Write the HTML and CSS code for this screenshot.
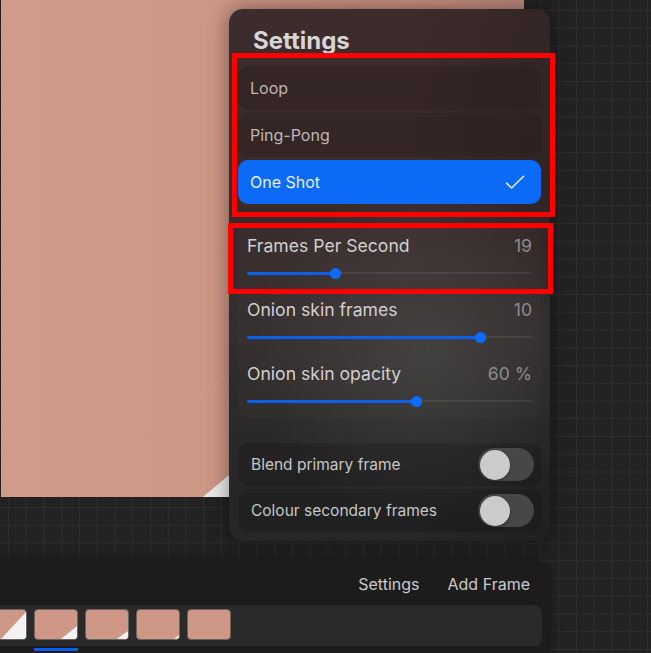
FILE: index.html
```html
<!DOCTYPE html>
<html lang="en">
<head>
<meta charset="utf-8">
<title>Animation Assist Settings</title>
<link rel="stylesheet" href="styles.css">
</head>
<body>
<div class="app">
  <div class="stage">
    <div class="artwork">
      <svg class="streak" width="523" height="497" viewBox="0 0 523 497"><line x1="80" y1="490" x2="235" y2="368" stroke="rgba(255,235,225,0.12)" stroke-width="1" stroke-dasharray="5 4"/></svg>
    </div>
  </div>

  <div class="timeline">
    <div class="tl-actions">
      <span>Settings</span>
      <span>Add Frame</span>
    </div>
    <div class="strip">
      <div class="thumb thumb--a"></div>
      <div class="thumb thumb--b"></div>
      <div class="thumb thumb--c"></div>
      <div class="thumb thumb--d"></div>
      <div class="thumb"></div>
    </div>
    <div class="indicator"></div>
  </div>

  <div class="popover">
    <h2 class="title">Settings</h2>
    <div class="modes">
      <div class="mode">Loop</div>
      <div class="mode">Ping-Pong</div>
      <div class="mode is-selected">One Shot
        <svg class="check" width="20" height="15" viewBox="0 0 20 15"><path d="M1.5 8.2 L6.6 13 L18.6 1.2" fill="none" stroke="#e4ecfb" stroke-width="1.6" stroke-linecap="round" stroke-linejoin="round"/></svg>
      </div>
    </div>
    <div class="sliders">
      <div class="slider">
        <div class="slider-head"><span>Frames Per Second</span><span class="val">19</span></div>
        <div class="track"><div class="fill" style="width:31.2%"></div></div>
      </div>
      <div class="slider">
        <div class="slider-head"><span>Onion skin frames</span><span class="val">10</span></div>
        <div class="track"><div class="fill" style="width:82.1%"></div></div>
      </div>
      <div class="slider">
        <div class="slider-head"><span>Onion skin opacity</span><span class="val">60 %</span></div>
        <div class="track"><div class="fill" style="width:59.6%"></div></div>
      </div>
    </div>
    <div class="toggles">
      <div class="toggle-row"><span>Blend primary frame</span><span class="switch"></span></div>
      <div class="toggle-row"><span>Colour secondary frames</span><span class="switch"></span></div>
    </div>
  </div>

  <div class="mark mark--modes"></div>
  <div class="mark mark--fps"></div>
</div>
</body>
</html>
```

FILE: styles.css
```css
* { box-sizing: border-box; }

html, body {
  margin: 0;
  padding: 0;
}

body {
  font-family: "Inter", "Liberation Sans", sans-serif;
  background: #222;
}

.app {
  position: relative;
  width: 651px;
  height: 653px;
  overflow: hidden;
  display: flex;
  flex-direction: column;
  background-color: #222222;
  background-image:
    linear-gradient(to right, #2e2e2e 1px, transparent 1px),
    linear-gradient(to bottom, #2e2e2e 1px, transparent 1px);
  background-size: 17.75px 17.75px;
  background-position: 8px 10px;
}

/* ---------- canvas ---------- */
.stage {
  flex: 1;
  min-height: 0;
}

.artwork {
  position: relative;
  width: 523px;
  height: 497px;
  margin-left: 1px;
  background: linear-gradient(90deg, #d09b89 0%, #cd9786 45%, #c68e7f 85%, #bb897d 100%);
}

.artwork::after {
  content: "";
  position: absolute;
  inset: 0;
  background: #ececec;
  clip-path: polygon(38.6% 100%, 100% 45.7%, 100% 100%);
}

.streak {
  position: absolute;
  left: 0;
  top: 0;
}

/* ---------- timeline ---------- */
.timeline {
  width: 550px;
  height: 95px;
  flex: none;
  background: #1c1c1c;
  border-top-right-radius: 22px;
  box-shadow: 0 0 14px rgba(0, 0, 0, 0.35);
  display: flex;
  flex-direction: column;
}

.tl-actions {
  display: flex;
  justify-content: flex-end;
  gap: 28px;
  padding: 16px 20px 0 0;
  height: 47px;
  font-size: 16px;
  line-height: 20px;
  color: #c9c9c9;
}

.strip {
  width: 542px;
  height: 41px;
  background: #2a2a2a;
  border-radius: 0 8px 8px 0;
  display: flex;
  gap: 7px;
  padding-top: 4px;
  padding-left: 0;
  overflow: hidden;
}

.thumb {
  position: relative;
  flex: none;
  width: 44px;
  height: 31px;
  border-radius: 4px;
  background: #cf9886;
  border: 1px solid #6b6160;
  overflow: hidden;
}

.thumb:first-child { margin-left: -17px; }

.thumb::after {
  content: "";
  position: absolute;
  right: 0;
  bottom: 0;
  width: 0;
  height: 0;
  background: #f2f2f2;
  clip-path: polygon(100% 0, 100% 100%, 0 100%);
}

.thumb--a::after { width: 25px; height: 27px; }
.thumb--b::after { width: 16px; height: 13px; }
.thumb--c::after { width: 11px; height: 8px; }
.thumb--d::after { width: 5px; height: 4px; }

.indicator {
  width: 44px;
  height: 3px;
  margin: 2px 0 0 34px;
  background: #0a5ef0;
}

/* ---------- popover ---------- */
.popover {
  position: absolute;
  left: 229px;
  top: 9px;
  width: 321px;
  height: 532px;
  padding: 0 9px 9px;
  border-radius: 14px;
  display: flex;
  flex-direction: column;
  background:
    radial-gradient(ellipse 55% 32% at 62% 64%, rgba(78, 76, 76, 0.55), rgba(78, 76, 76, 0) 100%),
    linear-gradient(90deg, rgba(0, 0, 0, 0) 55%, rgba(0, 0, 0, 0.14) 100%),
    linear-gradient(180deg, #3d2c2c 0%, #392a2a 40%, #332d2d 62%, #2a2828 82%, #262626 100%);
  box-shadow: 0 0 22px rgba(0, 0, 0, 0.45);
}

.title {
  margin: 17px 0 0 15px;
  font-size: 24px;
  line-height: 29px;
  font-weight: 700;
  color: #d7d5d5;
  letter-spacing: 0;
}

.modes {
  margin-top: 11px;
  display: flex;
  flex-direction: column;
  gap: 3px;
}

.mode {
  height: 44px;
  border-radius: 10px;
  padding: 0 16px 0 12px;
  display: flex;
  align-items: center;
  font-size: 16px;
  color: #bfb6b6;
  background: rgba(0, 0, 0, 0.1);
}

.mode.is-selected {
  background: #0b6af6;
  color: #e9f0fd;
}

.check {
  margin-left: auto;
}

.sliders {
  margin-top: 18px;
  padding: 14px 9px 11px;
  border-radius: 12px;
  background: rgba(255, 255, 255, 0.015);
}

.slider + .slider {
  margin-top: 21px;
}

.slider-head {
  display: flex;
  justify-content: space-between;
  font-size: 17.6px;
  line-height: 20px;
  color: #d1cfcf;
}

.val {
  color: #8d8b8b;
}

.track {
  position: relative;
  height: 12px;
  margin-top: 11px;
}

.track::before {
  content: "";
  position: absolute;
  left: 0;
  right: 0;
  top: 5px;
  height: 2px;
  background: rgba(255, 255, 255, 0.07);
}

.fill {
  position: absolute;
  left: 0;
  top: 4.5px;
  height: 3px;
  background: #0b5fe8;
  border-radius: 2px;
}

.fill::after {
  content: "";
  position: absolute;
  right: -5.5px;
  top: -4px;
  width: 11px;
  height: 11px;
  border-radius: 50%;
  background: #0c6cff;
}

.toggles {
  margin-top: 25px;
  display: flex;
  flex-direction: column;
  gap: 3px;
}

.toggle-row {
  height: 43px;
  border-radius: 10px;
  padding: 0 7px 0 13px;
  display: flex;
  align-items: center;
  justify-content: space-between;
  font-size: 15.5px;
  color: #c6c6c6;
  background: rgba(0, 0, 0, 0.14);
}

.switch {
  position: relative;
  width: 56px;
  height: 33px;
  border-radius: 17px;
  background: #474747;
}

.switch::after {
  content: "";
  position: absolute;
  left: 2px;
  top: 1.5px;
  width: 30px;
  height: 30px;
  border-radius: 50%;
  background: #cbcbcb;
  box-shadow: 0 1px 3px rgba(0, 0, 0, 0.35);
}

/* ---------- annotation marks ---------- */
.mark {
  position: absolute;
  border: 5px solid #ff0000;
  pointer-events: none;
}

.mark--modes {
  left: 232px;
  top: 53px;
  width: 323px;
  height: 164px;
}

.mark--fps {
  left: 228px;
  top: 223px;
  width: 325px;
  height: 71px;
}
```
